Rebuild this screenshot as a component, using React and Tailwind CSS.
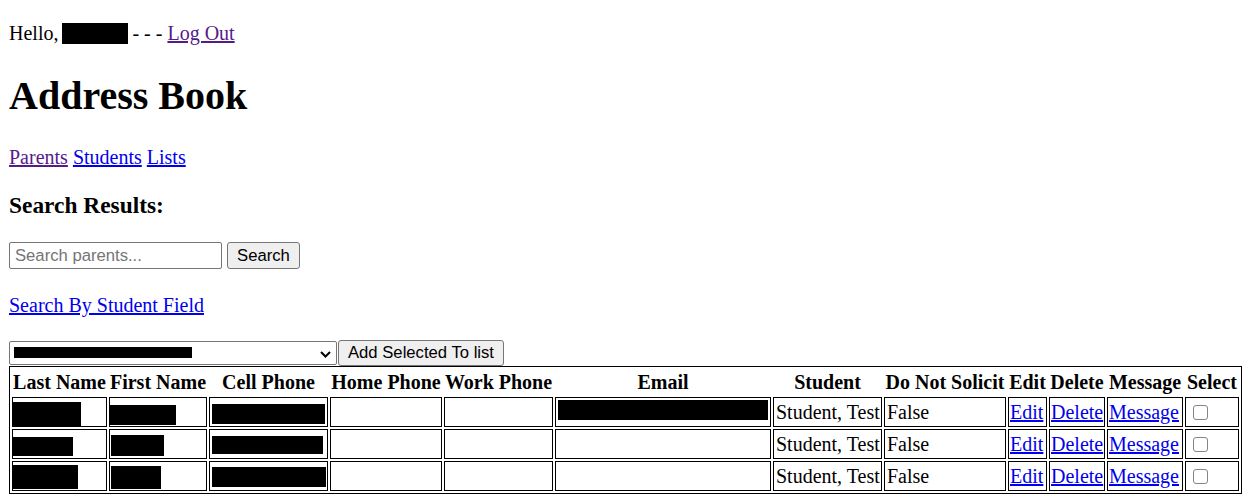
import React from "react";

const serif = { fontFamily: '"Liberation Serif", "Times New Roman", serif' };

const cols = [95, 98, 119, 112, 109, 216, 109, 122, 39, 56, 76, 54];
const colClasses = [
  "w-[95px]", "w-[98px]", "w-[119px]", "w-[112px]", "w-[109px]", "w-[216px]",
  "w-[109px]", "w-[122px]", "w-[39px]", "w-[56px]", "w-[76px]", "w-[54px]",
];
const headers = [
  "Last Name", "First Name", "Cell Phone", "Home Phone", "Work Phone", "Email",
  "Student", "Do Not Solicit", "Edit", "Delete", "Message", "Select",
];

const rows = [
  {
    boxes: [
      "left-0 top-[4px] w-[68px] h-[24px]",
      "-left-[1px] top-[7px] w-[67px] h-[20px]",
      "left-[2px] top-[6px] w-[113px] h-[20px]",
    ],
    email: true,
  },
  {
    boxes: [
      "left-0 top-[7px] w-[60px] h-[19px]",
      "left-[1px] top-[5px] w-[53px] h-[21px]",
      "left-[2px] top-[6px] w-[111px] h-[18px]",
    ],
    email: false,
  },
  {
    boxes: [
      "left-0 top-[3px] w-[65px] h-[24px]",
      "left-[1px] top-[4px] w-[50px] h-[23px]",
      "left-[2px] top-[5px] w-[114px] h-[20px]",
    ],
    email: false,
  },
];

function Redact({ cls }) {
  return <span className={"absolute bg-black " + cls} />;
}

export default function App() {
  return (
    <div className="bg-white text-black min-h-[504px] px-[9px] pt-[22px] pb-[8px] text-[20px] leading-[23px]" style={serif}>
      <p className="m-0 h-[23px] flex items-center whitespace-pre">
        <span>Hello,</span>
        <span className="inline-block bg-black w-[66px] h-[21px] ml-[4px] mr-[4px]" />
        <span>- - - </span>
        <a href="#" className="underline text-[#551A8B]">Log Out</a>
      </p>

      <h1 className="m-0 mt-[28px] text-[40px] leading-[46px] font-bold">Address Book</h1>

      <p className="m-0 mt-[27px] whitespace-pre">
        <a href="#" className="underline text-[#551A8B]">Parents</a>{" "}
        <a href="#" className="underline text-[#0000EE]">Students</a>{" "}
        <a href="#" className="underline text-[#0000EE]">Lists</a>
      </p>

      <h3 className="m-0 mt-[23px] text-[23.4px] leading-[27px] font-bold">Search Results:</h3>

      <div className="mt-[23px] flex items-center gap-[5px]" style={{ fontFamily: '"Liberation Sans", Arial, sans-serif' }}>
        <input
          type="text"
          placeholder="Search parents..."
          className="w-[213px] h-[27px] border border-[#767676] rounded-[2px] px-[5px] text-[16.67px] text-black placeholder:text-[#757575] bg-white outline-none"
        />
        <button className="w-[73px] h-[27px] border border-[#767676] rounded-[3px] bg-[#efefef] text-[16.67px] text-black flex items-center justify-center">
          Search
        </button>
      </div>

      <p className="m-0 mt-[25px]">
        <a href="#" className="underline text-[#0000EE]">Search By Student Field</a>
      </p>

      <div className="mt-[22px] h-[27px] flex items-center" style={{ fontFamily: '"Liberation Sans", Arial, sans-serif' }}>
        <div className="relative w-[328px] h-[24px] border border-[#767676] rounded-[2px] bg-white">
          <span className="absolute left-[4px] top-[5px] w-[178px] h-[11px] bg-black" />
          <svg className="absolute right-[5px] top-[9px]" width="11" height="7" viewBox="0 0 11 7">
            <path d="M1 1 L5.5 5.5 L10 1" fill="none" stroke="black" strokeWidth="2" />
          </svg>
        </div>
        <button className="ml-[1px] w-[166px] h-[26px] border border-[#767676] rounded-[3px] bg-[#efefef] text-[16.67px] text-black flex items-center justify-center">
          Add Selected To list
        </button>
      </div>

      <table className="table-fixed border-separate border-spacing-[2px] border border-black w-[1233px]">
        <colgroup>
          {cols.map((c, i) => (
            <col key={i} className={colClasses[i]} />
          ))}
        </colgroup>
        <thead>
          <tr>
            {headers.map((h) => (
              <th key={h} className="h-[26px] p-0 text-center font-bold whitespace-nowrap leading-[23px] align-middle">
                {h}
              </th>
            ))}
          </tr>
        </thead>
        <tbody>
          {rows.map((r, ri) => (
            <tr key={ri}>
              {r.boxes.map((b, bi) => (
                <td key={bi} className="relative h-[30px] p-0 border border-black">
                  <Redact cls={b} />
                </td>
              ))}
              <td className="h-[30px] p-0 border border-black" />
              <td className="h-[30px] p-0 border border-black" />
              <td className="relative h-[30px] p-0 border border-black">
                {r.email && <Redact cls="left-[2px] top-[2px] w-[210px] h-[20px]" />}
              </td>
              <td className="h-[30px] px-[2px] py-0 border border-black whitespace-nowrap align-middle">Student, Test</td>
              <td className="h-[30px] px-[2px] py-0 border border-black align-middle">False</td>
              <td className="h-[30px] px-[1px] py-0 border border-black align-middle">
                <a href="#" className="underline text-[#0000EE]">Edit</a>
              </td>
              <td className="h-[30px] px-[1px] py-0 border border-black align-middle">
                <a href="#" className="underline text-[#0000EE]">Delete</a>
              </td>
              <td className="h-[30px] px-[1px] py-0 border border-black align-middle">
                <a href="#" className="underline text-[#0000EE]">Message</a>
              </td>
              <td className="h-[30px] p-0 border border-black align-middle">
                <span
                  role="checkbox"
                  aria-checked="false"
                  className="block ml-[7px] w-[15px] h-[15px] border-[1.5px] border-[#858585] rounded-[3px] bg-white"
                />
              </td>
            </tr>
          ))}
        </tbody>
      </table>
    </div>
  );
}
